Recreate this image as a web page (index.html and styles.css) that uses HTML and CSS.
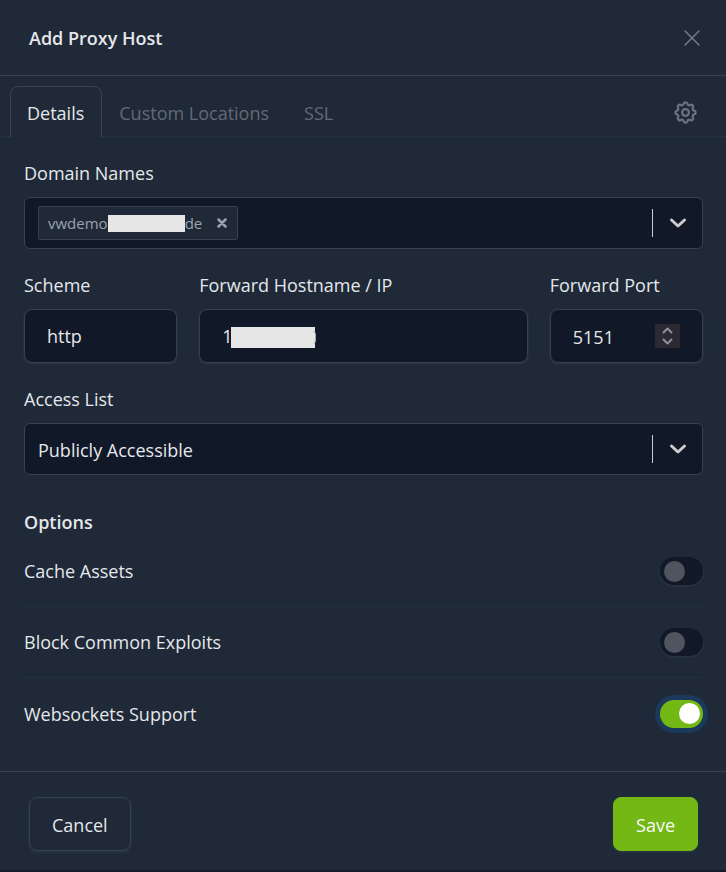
FILE: index.html
```html
<!DOCTYPE html>
<html lang="en">
<head>
<meta charset="utf-8">
<title>Add Proxy Host</title>
<link rel="stylesheet" href="styles.css">
</head>
<body>
<form class="modal">
  <header class="modal-header">
    <h1 class="title">Add Proxy Host</h1>
    <button class="icon-button close" type="button" aria-label="Close">
      <svg width="16" height="16" viewBox="0 0 16 16"><path d="M1 1l14 14M15 1L1 15"/></svg>
    </button>
  </header>
  <nav class="tabs">
    <a class="tab active" href="#details">Details</a>
    <a class="tab" href="#locations">Custom Locations</a>
    <a class="tab" href="#ssl">SSL</a>
    <a class="tab tab-settings" href="#advanced" aria-label="Advanced">
      <svg width="27" height="27" viewBox="0 0 24 24"><path d="M10.325 4.317c.426 -1.756 2.924 -1.756 3.35 0a1.724 1.724 0 0 0 2.573 1.066c1.543 -.94 3.31 .826 2.37 2.37a1.724 1.724 0 0 0 1.065 2.572c1.756 .426 1.756 2.924 0 3.35a1.724 1.724 0 0 0 -1.066 2.573c.94 1.543 -.826 3.31 -2.37 2.37a1.724 1.724 0 0 0 -2.572 1.065c-.426 1.756 -2.924 1.756 -3.35 0a1.724 1.724 0 0 0 -2.573 -1.066c-1.543 .94 -3.31 -.826 -2.37 -2.37a1.724 1.724 0 0 0 -1.065 -2.572c-1.756 -.426 -1.756 -2.924 0 -3.35a1.724 1.724 0 0 0 1.066 -2.573c-.94 -1.543 .826 -3.31 2.37 -2.37c1 .608 2.296 .07 2.572 -1.065z"/><circle cx="12" cy="12" r="3"/></svg>
    </a>
  </nav>
  <main class="modal-body">
    <div class="field">
      <label for="domains">Domain Names</label>
      <div class="picker">
        <span class="chip"><span>vwdemo</span><span class="redacted"></span><span>de</span><button class="chip-remove" type="button" aria-label="Remove domain"><svg width="10" height="10" viewBox="0 0 10 10"><path d="M1.500 1.500l7 7M8.500 1.500l-7 7"/></svg></button></span>
        <input class="picker-input" id="domains" type="text">
        <span class="divider"></span>
        <button class="picker-arrow" type="button" aria-label="Show domains"><svg width="18" height="12" viewBox="0 0 18 12"><path d="M2.500 3L9 9l6.500-6"/></svg></button>
      </div>
    </div>
    <div class="row">
      <div class="field narrow">
        <label for="scheme">Scheme</label>
        <select class="control" id="scheme"><option>http</option><option>https</option></select>
      </div>
      <div class="field wide">
        <label for="host">Forward Hostname / IP</label>
        <div class="host">
          <input class="control" id="host" type="text" value="1">
          <span class="host-mask"></span>
        </div>
      </div>
      <div class="field narrow">
        <label for="port">Forward Port</label>
        <div class="control number">
          <input class="number-input" id="port" type="number" value="5151">
          <span class="stepper">
            <button type="button" aria-label="Increase"><svg width="11" height="7" viewBox="0 0 11 7"><path d="M1.500 5.500l4-4 4 4"/></svg></button>
            <button type="button" aria-label="Decrease"><svg width="11" height="7" viewBox="0 0 11 7"><path d="M1.500 1.500l4 4 4-4"/></svg></button>
          </span>
        </div>
      </div>
    </div>
    <div class="field">
      <label for="access">Access List</label>
      <div class="picker">
        <select class="picker-input" id="access"><option>Publicly Accessible</option></select>
        <span class="divider"></span>
        <span class="picker-arrow"><svg width="18" height="12" viewBox="0 0 18 12"><path d="M2.500 3L9 9l6.500-6"/></svg></span>
      </div>
    </div>
    <h2 class="title options-title">Options</h2>
    <div class="options">
      <label class="option">Cache Assets<input class="switch" type="checkbox"></label>
      <label class="option">Block Common Exploits<input class="switch" type="checkbox"></label>
      <label class="option">Websockets Support<input class="switch focused" type="checkbox" checked></label>
    </div>
  </main>
  <footer class="modal-footer">
    <button class="button" type="button">Cancel</button>
    <button class="button primary" type="submit">Save</button>
  </footer>
</form>
</body>
</html>
```
FILE: styles.css
```css
* {
  box-sizing: border-box;
}

body {
  margin: 0;
  background: #1f2937;
  color: #e5e7eb;
  font: 18px/28px "Open Sans", "Noto Sans", sans-serif;
}

button,
input,
select {
  margin: 0;
  padding: 0;
  border: 0;
  background: transparent;
  color: inherit;
  font: inherit;
  appearance: none;
  outline: none;
}

svg {
  display: block;
  fill: none;
  stroke: currentColor;
  stroke-width: 2;
  stroke-linecap: round;
  stroke-linejoin: round;
}

.modal {
  border-bottom: 2px solid #151c29;
}

.modal-header {
  display: flex;
  align-items: center;
  justify-content: space-between;
  height: 76px;
  padding: 0 26px 0 29px;
  border-bottom: 1px solid #374151;
}

.title {
  margin: 0;
  font-size: 18px;
  font-weight: 600;
}

.close {
  width: 16px;
  color: #737b84;
}

.close svg {
  stroke-width: 1.500;
}

.tabs {
  display: flex;
  padding: 10px 10px 0;
  border-bottom: 1px solid #243240;
}

.tab {
  display: flex;
  align-items: center;
  height: 51px;
  margin-bottom: -1px;
  padding: 2px 17px 0 16px;
  border: 1px solid transparent;
  border-bottom: 0;
  color: #626a76;
  text-decoration: none;
}

.tab.active {
  border-color: #374151;
  border-radius: 8px 8px 0 0;
  background: #1f2937;
  color: #e5e7eb;
}

.tab-settings {
  margin-left: auto;
  padding: 0 16px;
  color: #6b7280;
}

.modal-body {
  padding: 22px 23px 22px 24px;
}

.field {
  display: flex;
  flex-direction: column;
  gap: 10px;
  min-width: 0;
  margin-bottom: 22px;
}

.row {
  display: grid;
  grid-template-columns: repeat(12, 1fr);
  gap: 22px;
}

.row .narrow {
  grid-column: span 3;
}

.row .wide {
  grid-column: span 6;
}

.picker {
  display: flex;
  align-items: center;
  height: 52px;
  padding: 0 0 0 13px;
  border: 1px solid #374151;
  border-radius: 6px;
  background: #111827;
}

.picker-input {
  flex: 1;
  min-width: 0;
  height: 100%;
}

select,
.number-input {
  padding-top: 1px;
}

.divider {
  width: 1px;
  height: 28px;
  background: #cccccc;
}

.picker-arrow {
  display: grid;
  place-items: center;
  width: 49px;
  height: 50px;
  color: #cccccc;
}

.picker-arrow svg {
  stroke-width: 3;
}

.chip {
  display: flex;
  align-items: center;
  height: 34px;
  padding-left: 9px;
  border: 1px solid #374151;
  border-radius: 2px;
  background: #1f2937;
  color: #9ca3af;
  font-size: 15px;
}

.redacted {
  width: 77px;
  height: 17px;
  background: #e6e6e6;
}

.chip-remove {
  padding: 0 10px 0 15px;
}

.chip-remove svg {
  stroke-width: 2.500;
}

.control {
  width: 100%;
  height: 54px;
  padding: 0 22px;
  border: 1px solid #374151;
  border-radius: 8px;
  background: #111827;
  box-shadow: 0 1px 3px #2f3947;
}

.host {
  position: relative;
}

.host-mask {
  position: absolute;
  top: 18px;
  left: 32px;
  width: 84px;
  height: 21px;
  background: #e6e6e6;
}

.host-mask::after {
  content: "";
  position: absolute;
  top: 4px;
  right: -1px;
  width: 4px;
  height: 13px;
  border-right: 1px solid #a5a8ae;
  border-radius: 0 4px 4px 0;
}

.number {
  display: flex;
  align-items: center;
  justify-content: space-between;
}

.number-input {
  flex: 1;
  min-width: 0;
  appearance: textfield;
}

.stepper {
  display: grid;
  align-content: center;
  justify-items: center;
  gap: 4px;
  width: 25px;
  height: 24px;
  background: #2b2a33;
  color: #8f8f9d;
}

.options-title {
  margin-top: 33px;
}

.option {
  display: flex;
  align-items: center;
  justify-content: space-between;
  height: 71px;
}

.option:not(:last-child) {
  border-bottom: 1px solid #243240;
}

.switch {
  display: flex;
  align-items: center;
  width: 43px;
  height: 28px;
  padding: 0 3px 0 4px;
  border-radius: 14px;
  background: #111827;
  box-shadow: 0 1px 3px #2f3947;
}

.switch::before {
  content: "";
  width: 21px;
  height: 21px;
  border-radius: 50%;
  background: #50545f;
}

.switch:checked {
  justify-content: flex-end;
  background: #74b816;
}

.switch:checked::before {
  background: #ffffff;
}

.switch.focused {
  box-shadow: 0 0 0 5px #1a395b;
}

.modal-footer {
  display: flex;
  justify-content: space-between;
  padding: 25px 28px 19px 29px;
  border-top: 1px solid #374151;
}

.button {
  height: 54px;
  padding: 1px 22px 0;
  border: 1px solid #374151;
  border-radius: 8px;
  box-shadow: 0 1px 3px #2f3947;
}

.button.primary {
  border-color: #74b816;
  background: #74b816;
  color: #f9fafb;
}
```
